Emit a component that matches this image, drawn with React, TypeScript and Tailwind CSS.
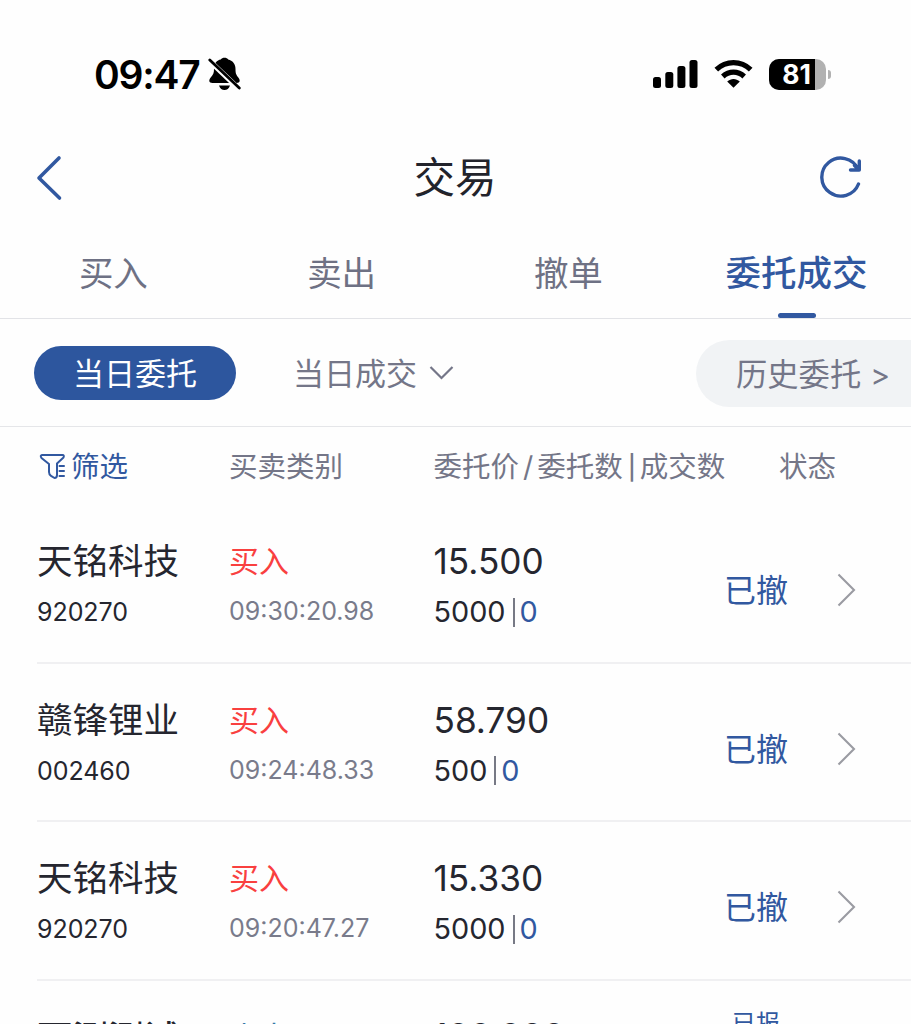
import React from "react";

type Order = {
  name: string;
  code: string;
  side: string;
  sideClass: string;
  time: string;
  price: string;
  qty: string;
  filled: string;
  status: string;
  partial?: boolean;
};

const orders: Order[] = [
  { name: "天铭科技", code: "920270", side: "买入", sideClass: "text-[#f9403f]", time: "09:30:20.98", price: "15.500", qty: "5000", filled: "0", status: "已撤" },
  { name: "赣锋锂业", code: "002460", side: "买入", sideClass: "text-[#f9403f]", time: "09:24:48.33", price: "58.790", qty: "500", filled: "0", status: "已撤" },
  { name: "天铭科技", code: "920270", side: "买入", sideClass: "text-[#f9403f]", time: "09:20:47.27", price: "15.330", qty: "5000", filled: "0", status: "已撤" },
  { name: "西测测试", code: "301306", side: "卖出", sideClass: "text-[#3479a8]", time: "09:15:12.40", price: "100.000", qty: "500", filled: "0", status: "已报", partial: true },
];

function StatusBar() {
  return (
    <header className="flex h-[128px] shrink-0 items-start justify-between pl-[94px] pr-[80px] pt-[54px]">
      <div className="flex h-10 items-center">
        <span className="w-[107px] whitespace-nowrap pt-px text-[39px] font-semibold leading-10 tracking-[-1.2px]">09:47</span>
        <svg className="ml-[7px]" width="34" height="36" viewBox="0 0 34 36">
          <path d="M4.5 27C0.8 27 0.5 24 2.7 21.5C5.2 18.8 6 17 6 13C6 7 9 4.3 12.8 3.6C14 1 19 1 20.2 3.6C24.5 4.5 27.5 8 27.5 13C27.5 17 28 18.5 30.3 21.5C32.5 24 32.2 27 28.5 27ZM11 29.5H22C21 32.8 19 34 16.5 34C14 34 12 32.8 11 29.5Z" fill="black" />
          <path d="M0.5 3.8L31 32.8" stroke="#fefefe" strokeWidth="5.2" />
          <path d="M1.8 4L31.3 32" stroke="black" strokeWidth="2.8" strokeLinecap="round" />
        </svg>
      </div>
      <div className="flex h-10 items-center">
        <svg width="45" height="30" viewBox="0 0 45 30">
          <rect x="0" y="18" width="8" height="11" rx="2.5" />
          <rect x="12.3" y="13" width="8" height="16" rx="2.5" />
          <rect x="24.4" y="7" width="8" height="22" rx="2.5" />
          <rect x="36.5" y="1" width="8" height="28" rx="2.5" />
        </svg>
        <svg className="ml-4" width="39" height="30" viewBox="0 0 39 30" fill="none" stroke="black" strokeWidth="5.2">
          <path d="M2.3 10.7C12 1.3 27 1.3 36.7 10.7" />
          <path d="M8.8 17.5C15 11.7 24 11.7 30.2 17.5" />
          <path d="M19.5 28.8L13.2 22.5C17 19 22 19 25.8 22.5Z" fill="black" stroke="none" />
        </svg>
        <div className="ml-4 flex h-[31px] w-[57px] overflow-hidden rounded-[10px] bg-[#b1b1b1]">
          <div className="flex w-[46px] justify-end bg-black pr-[4px] text-[26.5px] font-bold leading-[31px] text-white">81</div>
        </div>
        <div className="ml-[2px] h-[9px] w-[3px] rounded-r-full bg-[#b1b1b1]" />
      </div>
    </header>
  );
}

function Chevron() {
  return (
    <svg width="19" height="34" viewBox="0 0 19 34" fill="none" stroke="#9a9ba2" strokeWidth="2.1">
      <path d="M1.5 1.5L17 17L1.5 32.5" />
    </svg>
  );
}

function OrderRow({ order }: { order: Order }) {
  return (
    <article className="ml-[37px] flex h-[158.5px] shrink-0 border-b-2 border-[#f0f0f2] text-[#25262f]">
      <div className="w-[192px] shrink-0 pt-[33px]">
        <div className={order.partial ? "h-[48px] whitespace-nowrap pt-px text-[35.5px] font-medium leading-[48px]" : "h-[48px] whitespace-nowrap text-[35.5px] leading-[48px]"}>{order.name}</div>
        <div className="mt-[8px] text-[25px] leading-9 tracking-[-0.05px]">{order.code}</div>
      </div>
      <div className="w-[204.5px] shrink-0 pt-[32px]">
        <div className={`h-[48px] text-[30px] leading-[48px] ${order.sideClass}`}>{order.side}</div>
        <div className="mt-[8px] text-[25px] leading-9 text-[#797b8b]">{order.time}</div>
      </div>
      <div className={order.partial ? "w-[290.5px] shrink-0 pt-[30px]" : "w-[290.5px] shrink-0 pt-[32px]"}>
        <div className={order.partial ? "h-[48px] text-[34.6px] leading-[48px]" : "h-[48px] text-[35.2px] leading-[48px]"}>{order.price}</div>
        <div className="mt-[9px] flex h-9 items-center text-[28.8px] leading-9">
          <span>{order.qty}</span>
          <span className="ml-[7px] mr-[5px] h-[29px] w-[2px] bg-[#777985]" />
          <span className="text-[#3158a0]">{order.filled}</span>
        </div>
      </div>
      <div className={order.partial ? "w-[113px] shrink-0 pl-2 pt-[25px] text-[24px] text-[#3158a0]" : "w-[113px] shrink-0 pt-[62px] text-[32px] leading-[48px] text-[#3158a0]"}>{order.status}</div>
      <div className="pt-[68px]">
        <Chevron />
      </div>
    </article>
  );
}

export default function App() {
  return (
    <main className="flex h-[1024px] w-[911px] flex-col overflow-hidden bg-[#fefefe] font-['Inter','Noto_Sans_CJK_SC',sans-serif] text-black">
      <StatusBar />

      <nav className="flex h-[100px] shrink-0 items-center justify-between pl-[36px] pr-[48px] text-[#3158a0]">
        <svg width="28" height="46" viewBox="0 0 28 46" fill="none" stroke="currentColor" strokeWidth="3.6" strokeLinecap="round" strokeLinejoin="round">
          <path d="M23 3L3 23L23.5 43" />
        </svg>
        <h1 className="pl-[27px] text-[41.5px] font-normal leading-[60px] text-[#22232b]">交易</h1>
        <svg width="44" height="44" viewBox="0 0 44 44" fill="none" stroke="currentColor" strokeWidth="3.4" strokeLinecap="round" strokeLinejoin="round">
          <path d="M39.5 28A19 19 0 1 1 39 13M40.3 5V14H31.5M35.5 9.5L40 14" />
        </svg>
      </nav>

      <div className="grid h-[91px] shrink-0 grid-cols-4 border-b border-[#e2e3e7] text-center text-[34.5px] leading-[50px] text-[#6e7184]">
        <div className="pr-[1px] pt-[21px]">买入</div>
        <div className="pt-[21px]">卖出</div>
        <div className="pr-[2px] pt-[21px]">撤单</div>
        <div className="flex flex-col items-center justify-between pt-[21px] font-medium text-[#3158a0]">
          <span className="whitespace-nowrap pr-[1px] text-[35.5px]">委托成交</span>
          <span className="h-[5px] w-[38px] rounded-full bg-[#3158a0]" />
        </div>
      </div>

      <div className="flex h-[108px] shrink-0 items-center border-b border-[#e5e6e9] pl-[34px] text-[31px] text-[#747688]">
        <div className="flex h-[54px] w-[202px] shrink-0 items-center justify-center rounded-full bg-[#2d569e] pt-[3px] text-white">当日委托</div>
        <div className="ml-[57px] flex w-[403px] shrink-0 items-center">
          <span className="pt-[4px]">当日成交</span>
          <svg className="ml-3" width="25" height="16" viewBox="0 0 25 16" fill="none" stroke="currentColor" strokeWidth="2.2">
            <path d="M1.5 2L12.5 13L23.5 2" />
          </svg>
        </div>
        <div className="mt-px flex h-[67px] w-[255px] shrink-0 items-center whitespace-nowrap rounded-l-full bg-[#f1f3f5] pl-[40px] pt-[4px] text-[31.3px]">
          历史委托<span className="ml-[9px] text-[30px]">&gt;</span>
        </div>
      </div>

      <div className="flex h-[78px] shrink-0 items-center pl-[39px] pt-px text-[28.5px] text-[#747688]">
        <div className="flex w-[190px] items-center text-[#3158a0]">
          <svg width="28" height="28" viewBox="0 0 28 28" fill="none" stroke="currentColor" strokeWidth="2" strokeLinejoin="round" strokeLinecap="round">
            <path d="M3 2H23.5Q25.5 2 24.5 4.5L18 10.5V22Q18 25 15.5 25L12 22.8Q10 21.5 10 19V11L2.5 5Q0.8 2.5 3 2ZM20.5 13H25M20.5 18H25M20.5 23H25" />
          </svg>
          <span className="ml-1 pt-[2px]">筛选</span>
        </div>
        <div className="w-[204.5px] pt-[2px]">买卖类别</div>
        <div className="flex w-[345.5px] items-center whitespace-nowrap pt-[2px]">
          <span>委托价</span><span className="mx-1">/</span><span>委托数</span><span className="mx-[5px] w-[7px] text-center text-[24px] font-medium">|</span><span>成交数</span>
        </div>
        <div className="pt-[2px]">状态</div>
      </div>

      <section className="flex flex-col">
        {orders.map((order, i) => (
          <OrderRow key={i} order={order} />
        ))}
      </section>
    </main>
  );
}
